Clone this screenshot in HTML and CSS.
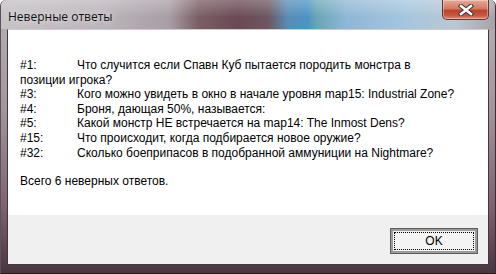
FILE: index.html
```html
<!DOCTYPE html>
<html lang="ru">
<head>
  <meta charset="UTF-8">
  <title>Неверные ответы</title>
  <link rel="stylesheet" href="styles.css">
</head>
<body>
  <div class="window">
    <div class="titlebar">
      <span class="title">Неверные ответы</span>
      <button class="close" aria-label="Закрыть">
        <svg width="16" height="12" viewBox="0 0 16 12">
          <path d="M3 2 L13 10 M13 2 L3 10" stroke="#3a3a3a" stroke-width="4.5" stroke-linecap="square"/>
          <path d="M3 2 L13 10 M13 2 L3 10" stroke="#ffffff" stroke-width="2.5" stroke-linecap="square"/>
        </svg>
      </button>
    </div>

    <div class="client">
      <div class="content">
        <div class="row"><span class="num">#1:</span>Что случится если Спавн Куб пытается породить монстра в<br>позиции игрока?</div>
        <div class="row"><span class="num">#3:</span>Кого можно увидеть в окно в начале уровня map15: Industrial Zone?</div>
        <div class="row"><span class="num">#4:</span>Броня, дающая 50%, называется:</div>
        <div class="row"><span class="num">#5:</span>Какой монстр НЕ встречается на map14: The Inmost Dens?</div>
        <div class="row"><span class="num">#15:</span>Что происходит, когда подбирается новое оружие?</div>
        <div class="row"><span class="num">#32:</span>Сколько боеприпасов в подобранной аммуниции на Nightmare?</div>
        <p class="total">Всего 6 неверных ответов.</p>
      </div>
      <div class="footer">
        <button class="ok"><span class="focus">OK</span></button>
      </div>
    </div>
  </div>
</body>
</html>
```

FILE: styles.css
```css
:root {
  --text: #000000;
  --panel: #f0f0f0;
  --frame-dark: #3b2a32;
}

* {
  box-sizing: border-box;
}

body {
  margin: 0;
  width: 496px;
  height: 274px;
  overflow: hidden;
  font-family: 'Liberation Sans', Arial, sans-serif;
  font-size: 12px;
  color: var(--text);
}

.window {
  width: 496px;
  height: 274px;
  display: flex;
  flex-direction: column;
  background: linear-gradient(to bottom, #b9b1b6 0%, #a3959c 40%, #7d6470 75%, #4a3440 100%);
  border-left: 1px solid #5a5055;
  border-right: 1px solid #3a2e34;
  border-radius: 6px 6px 0 0;
  padding-bottom: 8px;
  border-bottom: 1px solid #2a1c22;
}

.titlebar {
  height: 29px;
  display: flex;
  justify-content: space-between;
  align-items: flex-start;
  background:
    linear-gradient(to bottom, rgba(255, 255, 255, 0.25), rgba(255, 255, 255, 0) 60%),
    linear-gradient(to right, #c6c2c6 0%, #bcb6bb 20%, #a89ea5 34%, #7a5e66 40%, #6a4a54 48%, #6d5660 54%, #5a8cb4 58%, #4b93c6 62%, #6aa6b4 64%, #8fb7d6 70%, #a5c6de 82%, #b8c8d4 92%, #a9a2a8 100%);
  border-radius: 6px 6px 0 0;
}

.title {
  padding: 8px 0 0 7px;
  font-family: 'Open Sans', 'Noto Sans', sans-serif;
  font-size: 12px;
  color: #101010;
  text-shadow: 0 0 6px rgba(255, 255, 255, 0.9);
}

.close {
  width: 47px;
  height: 20px;
  margin-right: 6px;
  padding: 0;
  border: 1px solid #5a3a3a;
  border-top: none;
  border-radius: 0 0 5px 5px;
  background: linear-gradient(to bottom, #e5a99b 0%, #d47a63 45%, #c0432a 55%, #c8553d 80%, #e28a6e 100%);
  box-shadow: inset 0 0 0 1px rgba(255, 255, 255, 0.35);
  display: flex;
  align-items: center;
  justify-content: center;
}

.client {
  flex: 1;
  margin: 0 6px;
  display: flex;
  flex-direction: column;
  border: 1px solid #3f3a3e;
  border-top-color: #cfcacd;
}

.content {
  flex: 1;
  background: #ffffff;
  padding: 28px 12px 0 12px;
  line-height: 14.6px;
}

.num {
  display: inline-block;
  width: 57px;
}

.total {
  margin: 14px 0 0 0;
}

.footer {
  height: 49px;
  background: var(--panel);
  display: flex;
  justify-content: flex-end;
  align-items: flex-start;
  padding: 13px 10px 0 0;
}

.ok {
  width: 88px;
  height: 26px;
  padding: 3px;
  font-family: 'Liberation Sans', Arial, sans-serif;
  font-size: 12px;
  color: #000000;
  background: #f4f4f4;
  border: 1px solid #5c5c5c;
  box-shadow: inset 0 0 0 2px #9b9b9b;
}

.focus {
  display: flex;
  align-items: center;
  justify-content: center;
  width: 100%;
  height: 100%;
  border: 1px dotted #000000;
}
```
